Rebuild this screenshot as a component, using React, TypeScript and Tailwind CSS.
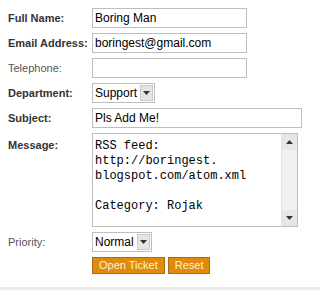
const labelBold = "font-bold text-[#333]";
const labelPlain = "text-[#555]";

function TextBox({ value, className = "w-[155px]" }: { value?: string; className?: string }) {
	return (
		<div
			className={`flex h-[20px] items-center border border-[#bdbdbd] bg-white px-[2px] text-[12px] text-black ${className}`}
		>
			{value}
		</div>
	);
}

function Arrow({ up = false }: { up?: boolean }) {
	return (
		<svg width="7" height="4" viewBox="0 0 7 4" className={up ? "rotate-180" : ""}>
			<path d="M0 0h7L3.5 4z" fill="#333" />
		</svg>
	);
}

function SelectBox({ value }: { value: string }) {
	return (
		<div className="flex h-[20px] w-fit items-center gap-[3px] border border-[#bdbdbd] bg-white pl-[2px] pr-[1px] text-[12px] text-black">
			<span>{value}</span>
			<span className="flex h-[16px] w-[13px] items-center justify-center border border-[#c8c8c8] bg-[#e4e4e4]">
				<Arrow />
			</span>
		</div>
	);
}

const message = `RSS feed:
http://boringest.
blogspot.com/atom.xml

Category: Rojak`;

export default function App() {
	return (
		<div className="relative h-[290px] w-[320px] bg-white font-['Liberation_Sans',Arial,sans-serif] text-[11px]">
			<div className="grid grid-cols-[84px_auto] items-center gap-y-[5px] pl-[8px] pt-[8px]">
				<span className={labelBold}>Full Name:</span>
				<TextBox value="Boring Man" />

				<span className={labelBold}>Email Address:</span>
				<TextBox value="boringest@gmail.com" />

				<span className={labelPlain}>Telephone:</span>
				<TextBox />

				<span className={labelBold}>Department:</span>
				<SelectBox value="Support" />

				<span className={labelBold}>Subject:</span>
				<TextBox value="Pls Add Me!" className="w-[210px]" />

				<span className={`${labelBold} self-start pt-[4px]`}>Message:</span>
				<div className="flex h-[94px] w-[206px] border border-[#bdbdbd] bg-white">
					<pre className="flex-1 overflow-hidden pl-[2px] pt-[5px] font-['Liberation_Mono','Courier_New',monospace] text-[12px] leading-[15px] text-black">
						{message}
					</pre>
					<div className="flex w-[16px] flex-col justify-between border-l border-[#e2e2e2] bg-[#f1f1f1]">
						<span className="flex h-[16px] items-center justify-center bg-[#e6e6e6]">
							<Arrow up />
						</span>
						<span className="flex h-[16px] items-center justify-center bg-[#e6e6e6]">
							<Arrow />
						</span>
					</div>
				</div>

				<span className={labelPlain}>Priority:</span>
				<SelectBox value="Normal" />

				<span />
				<div className="flex gap-[3px]">
					<button className="h-[17px] border border-[#a86a14] bg-[#e08a0e] px-[6px] text-[11px] leading-none text-[#fff3dc]">
						Open Ticket
					</button>
					<button className="h-[17px] border border-[#a86a14] bg-[#e08a0e] px-[6px] text-[11px] leading-none text-[#fff3dc]">
						Reset
					</button>
				</div>
			</div>
			<div className="absolute inset-x-0 bottom-0 h-[3px] bg-[#ececec]" />
		</div>
	);
}
